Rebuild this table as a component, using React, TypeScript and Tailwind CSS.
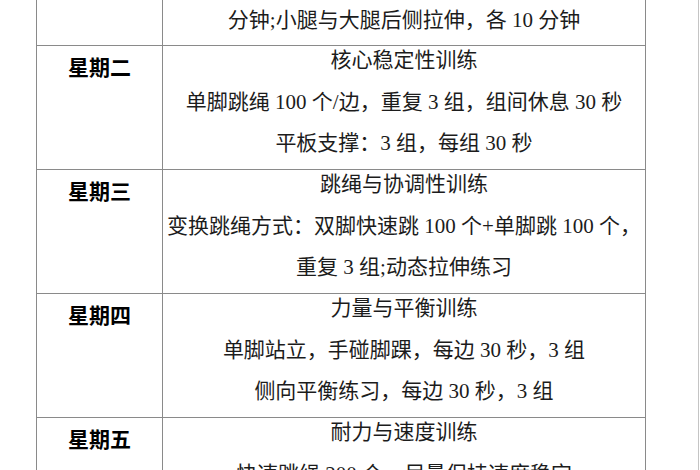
const rows = [
  {
    day: '星期二',
    title: '核心稳定性训练',
    lines: ['单脚跳绳 100 个/边，重复 3 组，组间休息 30 秒', '平板支撑：3 组，每组 30 秒'],
  },
  {
    day: '星期三',
    title: '跳绳与协调性训练',
    lines: ['变换跳绳方式：双脚快速跳 100 个+单脚跳 100 个，', '重复 3 组;动态拉伸练习'],
  },
  {
    day: '星期四',
    title: '力量与平衡训练',
    lines: ['单脚站立，手碰脚踝，每边 30 秒，3 组', '侧向平衡练习，每边 30 秒，3 组'],
  },
  {
    day: '星期五',
    title: '耐力与速度训练',
    lines: ['快速跳绳 200 个，尽量保持速度稳定'],
  },
]

const body = "font-['Liberation_Serif','Noto_Sans_CJK_SC',serif]"

export default function App() {
  return (
    <div className="flex h-[470px] w-[700px] overflow-hidden bg-white text-[21px] text-[#1c1c1c]">
      {/* table */}
      <div className="ml-[36px] flex w-[610px] shrink-0 flex-col">
        {/* tail of the previous row */}
        <div className="flex h-[46px] shrink-0 border-b border-[#8a8a8a]">
          <div className="w-[127px] shrink-0 border-x border-[#8a8a8a]" />
          <div className={`flex-1 border-r border-[#8a8a8a] text-center leading-[40px] whitespace-nowrap ${body}`}>
            分钟;小腿与大腿后侧拉伸，各 10 分钟
          </div>
        </div>

        {rows.map((row) => (
          <div key={row.day} className="flex h-[124px] shrink-0 border-b border-[#8a8a8a]">
            <div className="w-[127px] shrink-0 border-x border-[#8a8a8a] pt-[6px] text-center font-['Noto_Sans_CJK_SC',sans-serif] leading-[28px] font-bold text-black">
              {row.day}
            </div>
            <div className={`flex-1 border-r border-[#8a8a8a] text-center whitespace-nowrap ${body}`}>
              <div className="leading-[28px]">{row.title}</div>
              <div className="mt-[8px] leading-[41px]">
                {row.lines.map((line) => (
                  <div key={line}>{line}</div>
                ))}
              </div>
            </div>
          </div>
        ))}
      </div>

      {/* page edge */}
      <div className="mr-[1px] flex-1 border-r border-[#c4c4c4]" />
    </div>
  )
}
